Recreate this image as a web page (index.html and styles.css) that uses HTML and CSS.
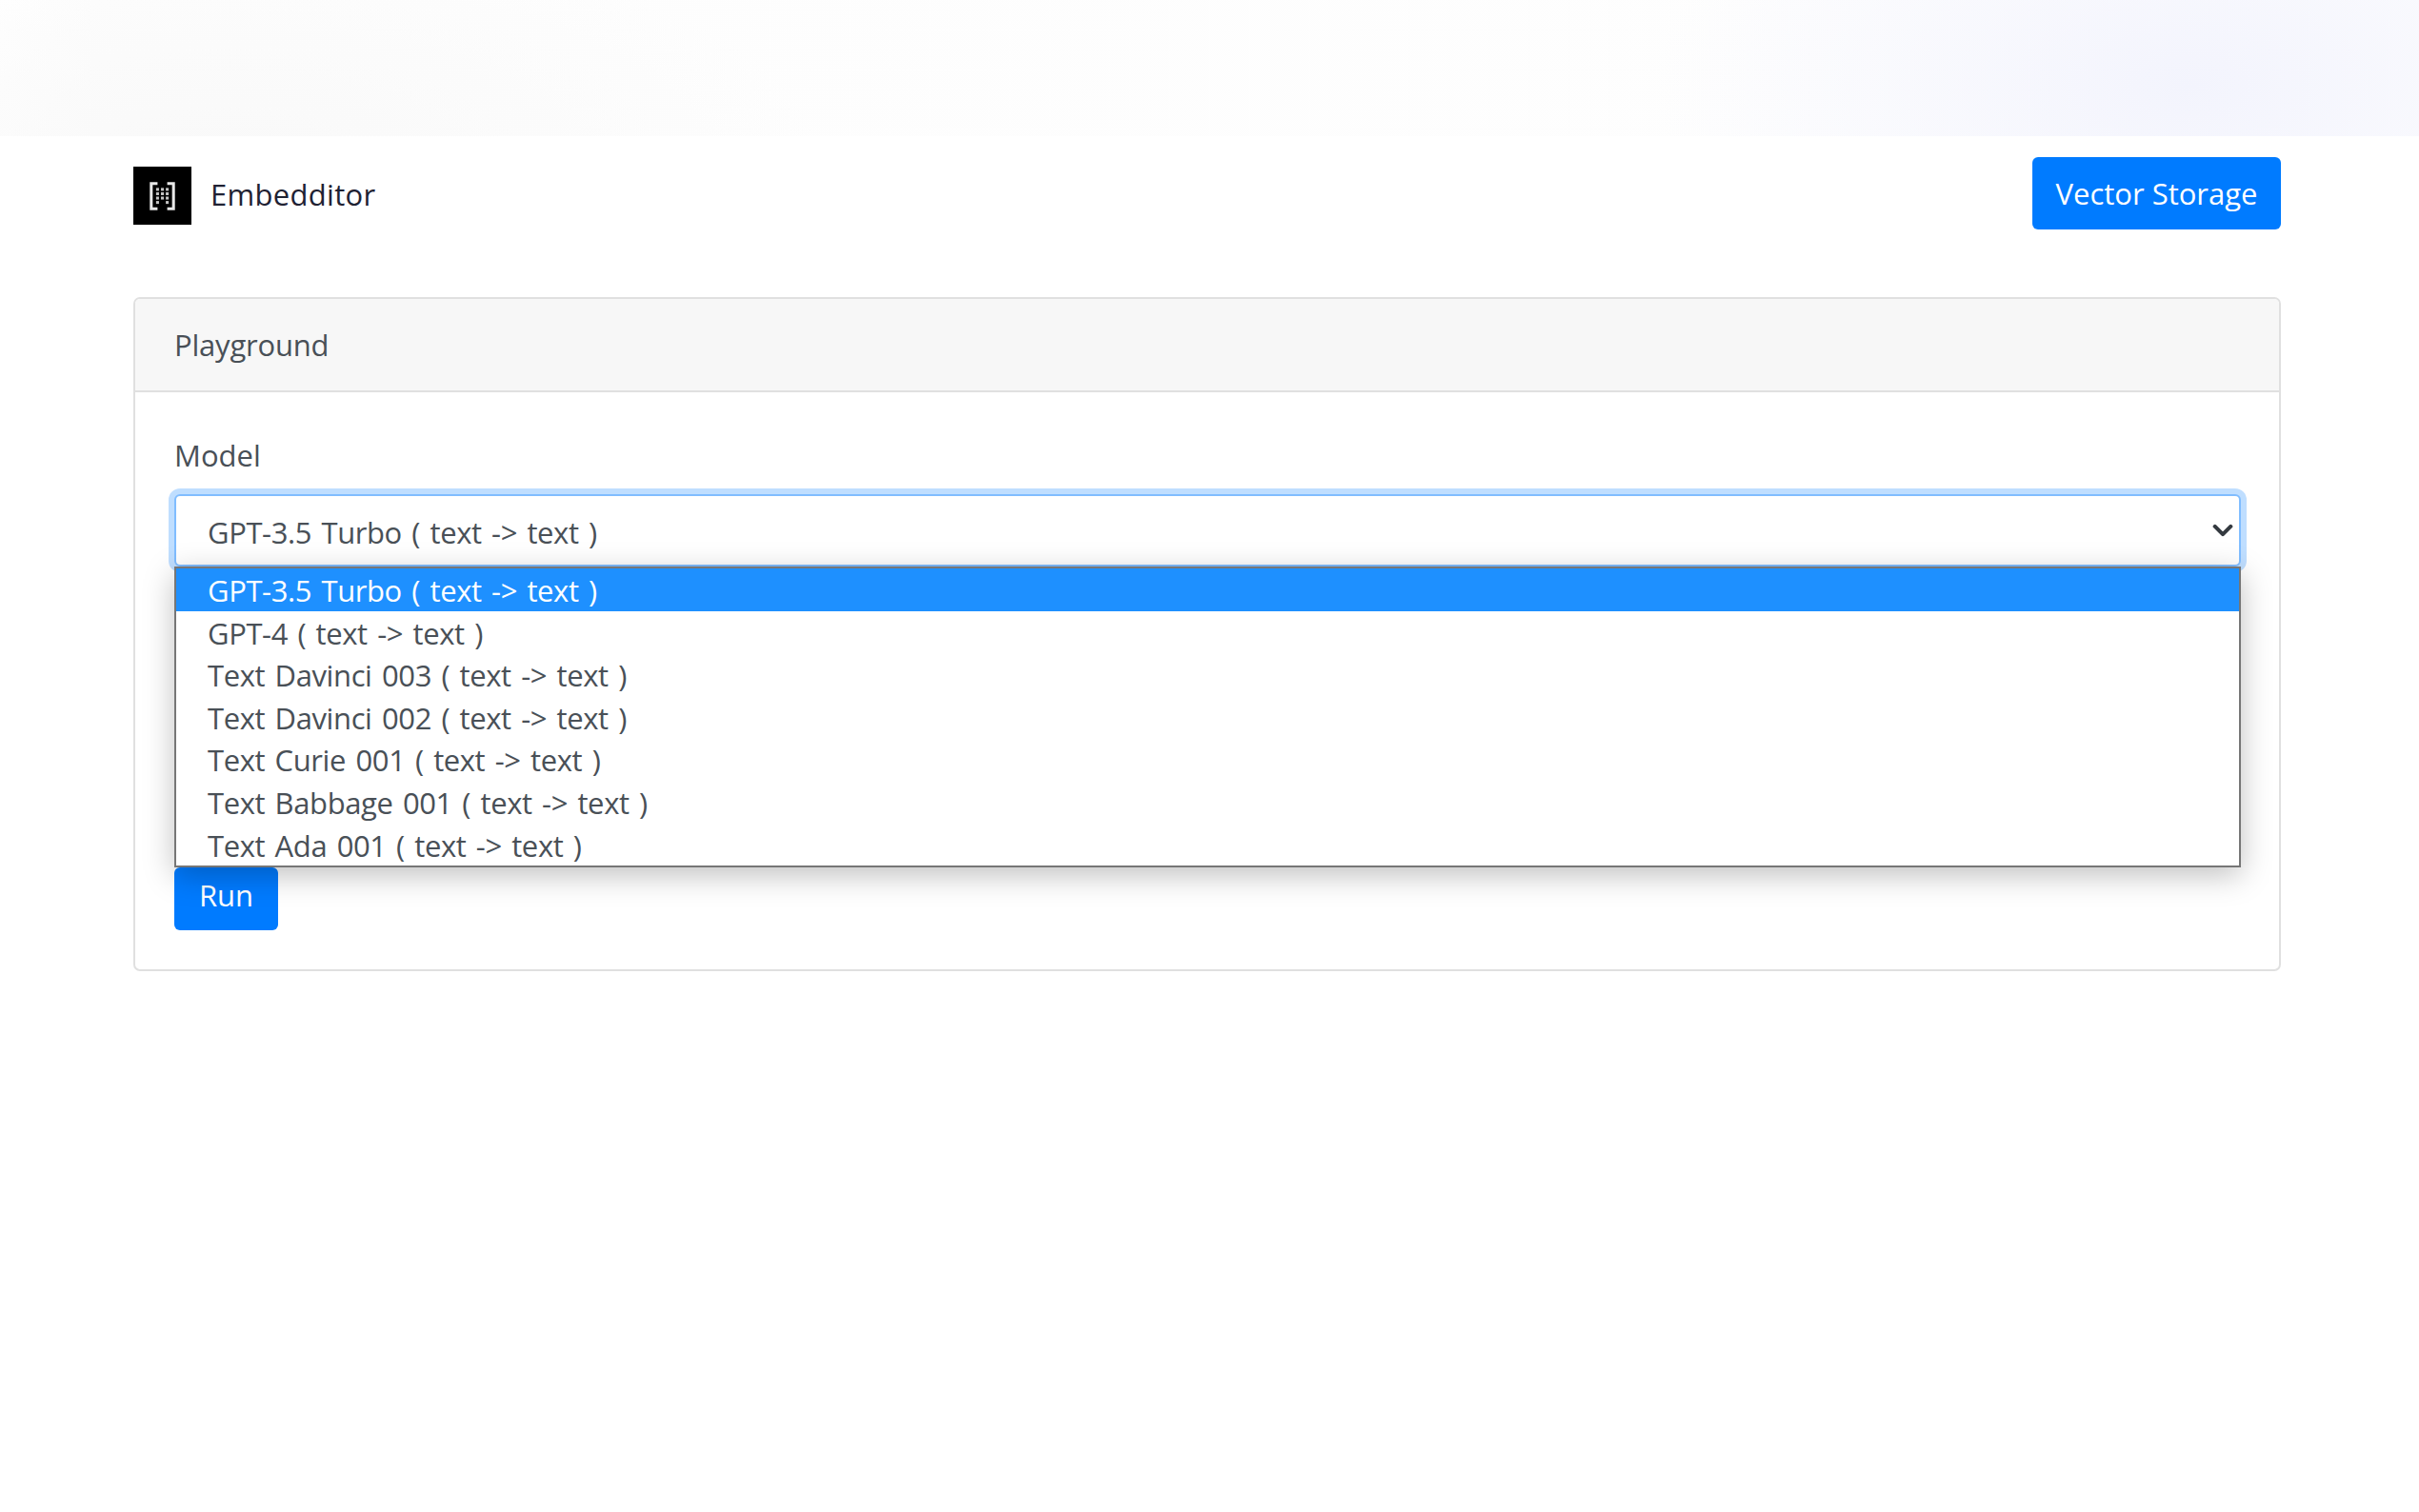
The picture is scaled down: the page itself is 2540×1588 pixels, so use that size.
FILE: index.html
```html
<!DOCTYPE html>
<html lang="en">
<head>
<meta charset="utf-8">
<title>Embedditor</title>
<link rel="stylesheet" href="styles.css">
</head>
<body>
<div class="top-band"></div>
<div class="page">
  <header class="navbar">
    <a class="brand">
      <span class="logo">
        <svg viewBox="0 0 60 60" width="60" height="60" aria-hidden="true">
          <g fill="none" stroke="#e8e8e8" stroke-width="3">
            <path d="M25 17.5h-6.500v26h6.500"/>
            <path d="M35 17.5h6.500v26h-6.500"/>
          </g>
          <g fill="#c4c4c4">
            <rect x="23.500" y="22" width="3" height="3"/><rect x="28.500" y="22" width="3" height="3"/><rect x="33.500" y="22" width="3" height="3"/>
            <rect x="23.500" y="26.500" width="3" height="3"/><rect x="28.500" y="26.500" width="3" height="3"/><rect x="33.500" y="26.500" width="3" height="3"/>
            <rect x="23.500" y="31" width="3" height="3"/><rect x="28.500" y="31" width="3" height="3"/><rect x="33.500" y="31" width="3" height="3"/>
            <rect x="23.500" y="35.500" width="3" height="3"/><rect x="33.500" y="35.500" width="3" height="3"/>
          </g>
        </svg>
      </span>
      <span class="brand-name">Embedditor</span>
    </a>
    <a class="btn btn-storage">Vector Storage</a>
  </header>

  <section class="card">
    <div class="card-header">Playground</div>
    <div class="card-body">
      <label class="field-label">Model</label>
      <div class="select-wrap">
        <div class="select">
          <span class="select-value">GPT-3.5 Turbo ( text -&gt; text )</span>
          <svg class="chevron" viewBox="0 0 16 16" width="22" height="22" aria-hidden="true">
            <path d="M2 5l6 6 6-6" fill="none" stroke="#343a40" stroke-width="3" stroke-linecap="round" stroke-linejoin="round"/>
          </svg>
        </div>
        <ul class="dropdown">
          <li class="option selected">GPT-3.5 Turbo ( text -&gt; text )</li>
          <li class="option">GPT-4 ( text -&gt; text )</li>
          <li class="option">Text Davinci 003 ( text -&gt; text )</li>
          <li class="option">Text Davinci 002 ( text -&gt; text )</li>
          <li class="option">Text Curie 001 ( text -&gt; text )</li>
          <li class="option">Text Babbage 001 ( text -&gt; text )</li>
          <li class="option">Text Ada 001 ( text -&gt; text )</li>
        </ul>
      </div>
      <button class="btn btn-run">Run</button>
    </div>
  </section>
</div>
</body>
</html>
```
FILE: styles.css
```css
* { box-sizing: border-box; }
html, body { margin: 0; padding: 0; }
body {
  background: #fff;
  font-family: "Open Sans", "Noto Sans", sans-serif;
  font-size: 31px;
  color: #212529;
  height: 1588px;
  overflow: hidden;
}
.top-band {
  height: 143px;
  background:
    radial-gradient(ellipse 620px 240px at 240px 170px, #f9f9f9 0%, rgba(250,250,250,0) 100%),
    radial-gradient(ellipse 560px 300px at 2300px 90px, #f3f4fd 0%, rgba(244,245,253,0) 100%),
    linear-gradient(90deg, #fff 0%, #fdfdfd 4%, #fefefe 100%);
}
.page { padding: 22px 145px 0 140px; }
.navbar {
  display: flex;
  align-items: center;
  justify-content: space-between;
  height: 76px;
}
.brand { display: flex; align-items: center; gap: 20px; margin-top: 4px; }
.logo {
  display: block;
  width: 61px;
  height: 61px;
  background: #000;
}
.logo svg { display: block; width: 61px; height: 61px; }
.brand-name {
  font-size: 31px;
  color: #1f2233;
  letter-spacing: 0.3px;
  position: relative;
  top: -1px;
}
.btn {
  display: block;
  border: 0;
  background: #007bff;
  color: #fff;
  font-family: inherit;
  border-radius: 6px;
  text-align: center;
}
.btn-storage {
  width: 261px;
  height: 76px;
  line-height: 76px;
  font-size: 31px;
}
.card {
  margin-top: 71px;
  height: 708px;
  border: 2px solid #e0e0e0;
  border-radius: 7px;
}
.card-header {
  height: 98px;
  background: #f7f7f7;
  border-bottom: 2px solid #e0e0e0;
  border-radius: 5px 5px 0 0;
  padding: 0 41px;
  line-height: 97px;
  color: #495057;
  letter-spacing: -0.2px;
}
.card-body { padding: 46px 40px 0 41px; }
.field-label {
  display: block;
  height: 40px;
  line-height: 40px;
  color: #495057;
}
.select-wrap { position: relative; margin-top: 21px; }
.select {
  height: 76px;
  display: flex;
  align-items: center;
  justify-content: space-between;
  padding: 0 6px 0 33px;
  background: #fff;
  border: 2px solid #80bdff;
  border-radius: 6px;
  box-shadow: 0 0 0 6px rgba(0,123,255,.25);
  color: #495057;
  letter-spacing: -0.4px;
  word-spacing: 2.8px;
}
.select-value { padding-top: 3px; }
.chevron { display: block; }
.dropdown {
  position: absolute;
  left: 0;
  right: 0;
  top: 76px;
  margin: 0;
  padding: 0;
  list-style: none;
  background: #fff;
  border: 2px solid #767676;
  box-shadow: 0 8px 30px rgba(0,0,0,.25);
  height: 316px;
}
.option {
  height: 44.6px;
  line-height: 47px;
  padding-left: 33px;
  color: #495057;
  letter-spacing: -0.4px;
  word-spacing: 2.8px;
  white-space: nowrap;
}
.option.selected { background: #1e90ff; color: #fff; }
.btn-run {
  width: 109px;
  height: 66px;
  margin-top: 316px;
  padding: 0 0 8px;
  font-size: 31px;
}
```
